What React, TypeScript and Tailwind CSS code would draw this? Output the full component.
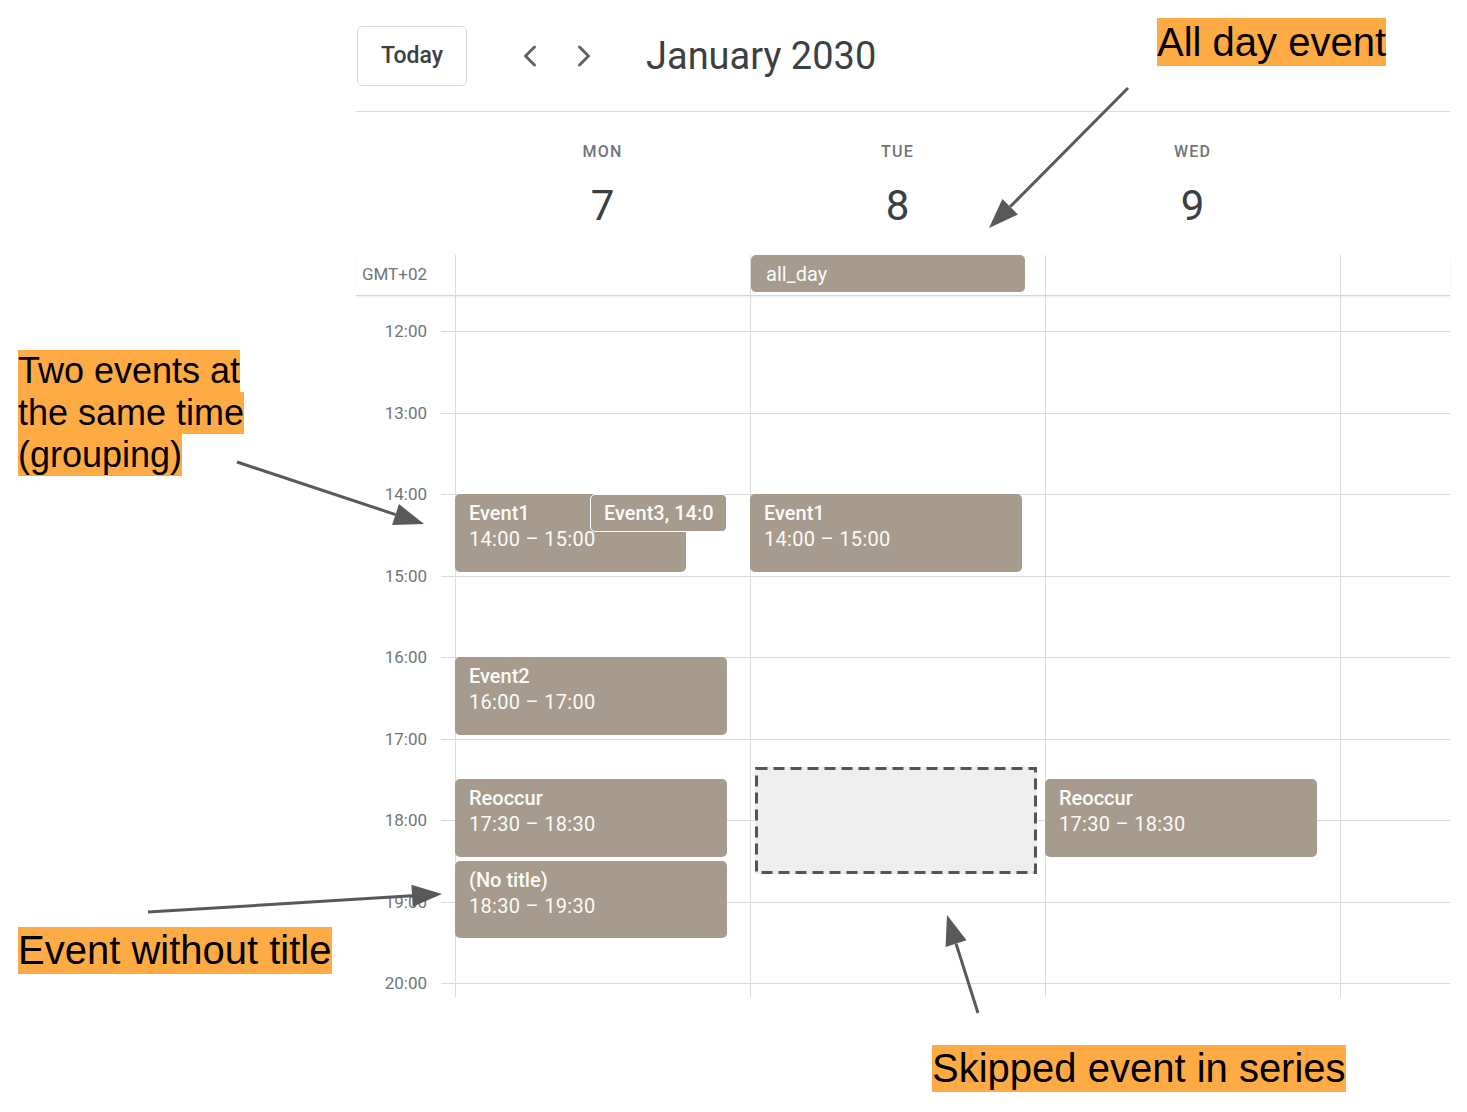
import React from "react"
import { ChevronLeft, ChevronRight } from "lucide-react"

type Ev = {
    title: string
    time?: string
    day: number
    start: number
    end: number
    width?: number
}

const HOUR = 81.5
const OFFSET = 35 // grid is scrolled so 12:00 sits 35px below the all-day row
const FIRST = 12

const hours = ["12:00", "13:00", "14:00", "15:00", "16:00", "17:00", "18:00", "19:00"]

const days = [
    { name: "MON", num: "7" },
    { name: "TUE", num: "8" },
    { name: "WED", num: "9" },
]

const events: Ev[] = [
    { title: "Event1", time: "14:00 – 15:00", day: 0, start: 14, end: 15, width: 231 },
    { title: "Event2", time: "16:00 – 17:00", day: 0, start: 16, end: 17 },
    { title: "Reoccur", time: "17:30 – 18:30", day: 0, start: 17.5, end: 18.5 },
    { title: "(No title)", time: "18:30 – 19:30", day: 0, start: 18.5, end: 19.5 },
    { title: "Event1", time: "14:00 – 15:00", day: 1, start: 14, end: 15 },
    { title: "Reoccur", time: "17:30 – 18:30", day: 2, start: 17.5, end: 18.5 },
]

const yOf = (h: number) => OFFSET + (h - FIRST) * HOUR

function EventCard({ ev }: { ev: Ev }) {
    const top = yOf(ev.start)
    const height = (ev.end - ev.start) * HOUR - 4
    return (
        <div
            className="absolute overflow-hidden whitespace-nowrap rounded-[5px] bg-[#a69b8c] px-[14px] pt-[6px] text-[#fbfaf8]"
            style={{ top, height, left: -1, width: ev.width ?? 272 }}
        >
            <div className="text-[20px] font-medium leading-[26px]">{ev.title}</div>
            <div className="text-[20px] leading-[26px] tracking-[0.3px]">{ev.time}</div>
        </div>
    )
}

// arrow with a filled head, tip at (x2, y2)
function Arrow({ x1, y1, x2, y2 }: { x1: number; y1: number; x2: number; y2: number }) {
    const dx = x2 - x1
    const dy = y2 - y1
    const len = Math.hypot(dx, dy)
    const ux = dx / len
    const uy = dy / len
    const L = 30
    const W = 11
    const bx = x2 - ux * L
    const by = y2 - uy * L
    const pts = `${x2},${y2} ${bx - uy * W},${by + ux * W} ${bx + uy * W},${by - ux * W}`
    return (
        <g>
            <line x1={x1} y1={y1} x2={bx} y2={by} stroke="#595959" strokeWidth={3} />
            <polygon points={pts} fill="#595959" />
        </g>
    )
}

export default function App() {
    return (
        <div className="relative h-[1112px] w-[1467px] overflow-hidden bg-white font-['Roboto',sans-serif]">
            <div className="ml-[356px] w-[1094px]">
                {/* toolbar */}
                <div className="flex items-center border-b border-[#dadce0] pb-[25px] pt-[26px]">
                    <button className="ml-[1px] h-[60px] w-[110px] rounded-[5px] border border-[#dadce0] text-[23px] font-medium text-[#3c4043]">
                        Today
                    </button>
                    <ChevronLeft className="ml-[45px] text-[#5f6368]" size={36} strokeWidth={2} />
                    <ChevronRight className="ml-[18px] text-[#5f6368]" size={36} strokeWidth={2} />
                    <h1 className="ml-[44px] text-[38px] font-normal leading-none text-[#3c4043]">January 2030</h1>
                </div>

                {/* day headers */}
                <div className="flex pb-[25px] pt-[30px]">
                    <div className="w-[99px]" />
                    {days.map((d) => (
                        <div key={d.name} className="flex w-[295px] flex-col items-center">
                            <div className="text-[16px] font-medium leading-[20px] tracking-[1.2px] text-[#70757a]">{d.name}</div>
                            <div className="mt-[20px] text-[42px] leading-[48px] text-[#3c4043]">{d.num}</div>
                        </div>
                    ))}
                </div>

                {/* all-day row */}
                <div className="flex h-[41px] border-b border-[#d3d5d9] shadow-[0_1px_2px_rgba(0,0,0,0.08)]">
                    <div className="flex w-[99px] items-center justify-end pr-[28px] text-[17px] text-[#70757a]">GMT+02</div>
                    {days.map((d, i) => (
                        <div key={d.name} className="relative w-[295px] border-l border-[#dadce0]">
                            {i === 1 && (
                                <div className="absolute left-0 top-0 flex h-[37px] w-[274px] items-center rounded-[5px] bg-[#a69b8c] px-[15px] text-[20px] text-[#fbfaf8]">
                                    all_day
                                </div>
                            )}
                        </div>
                    ))}
                    <div className="flex-1 border-l border-[#dadce0]" />
                </div>

                {/* time grid */}
                <div className="relative">
                    <div className="h-[35px]" />
                    {hours.map((h) => (
                        <div key={h} className="flex h-[81.5px]">
                            <div className="-mt-[8px] h-[16px] w-[71px] text-right text-[17px] leading-[16px] text-[#70757a]">{h}</div>
                            <div className="ml-[14px] flex-1 border-t border-[#dadce0]" />
                        </div>
                    ))}
                    <div className="flex h-[14px]">
                        <div className="-mt-[8px] h-[16px] w-[71px] text-right text-[17px] leading-[16px] text-[#70757a]">20:00</div>
                        <div className="ml-[14px] flex-1 border-t border-[#dadce0]" />
                    </div>

                    <div className="absolute inset-y-0 left-[99px] right-0 flex">
                        {days.map((d, i) => (
                            <div key={d.name} className="relative w-[295px] border-l border-[#dadce0]">
                                {events
                                    .filter((e) => e.day === i)
                                    .map((e, k) => (
                                        <EventCard key={k} ev={e} />
                                    ))}
                                {i === 0 && (
                                    <div className="absolute left-[134px] top-[198px] h-[38px] w-[137px] rounded-[5px] border border-white bg-[#a69b8c] pl-[13px] pr-[12px] text-[20px] font-medium leading-[36px] text-[#fbfaf8]">
                                        <div className="overflow-hidden whitespace-nowrap">Event3, 14:00</div>
                                    </div>
                                )}
                                {i === 1 && (
                                    <div className="absolute left-[4px] top-[471px] h-[107px] w-[282px] bg-[#eeeeee]">
                                        <svg className="absolute inset-0" width={282} height={107}>
                                            <rect x={1.5} y={1.5} width={279} height={104} fill="none" stroke="#555" strokeWidth={3} strokeDasharray="11 6" />
                                        </svg>
                                    </div>
                                )}
                            </div>
                        ))}
                        <div className="flex-1 border-l border-[#dadce0]" />
                    </div>
                </div>
            </div>

            {/* annotations */}
            <div className="absolute left-[1157px] top-[18px] bg-[#ffab45] font-['Liberation_Sans',Arial,sans-serif] text-[40px] leading-[48px] text-black">
                All day event
            </div>
            <div className="absolute left-[18px] top-[350px] font-['Liberation_Sans',Arial,sans-serif] text-[36px] leading-[42px] text-black">
                <div className="w-fit bg-[#ffab45]">Two events at</div>
                <div className="w-fit bg-[#ffab45]">the same time</div>
                <div className="w-fit bg-[#ffab45]">(grouping)</div>
            </div>
            <div className="absolute left-[18px] top-[927px] bg-[#ffab45] font-['Liberation_Sans',Arial,sans-serif] text-[40px] leading-[47px] text-black">
                Event without title
            </div>
            <div className="absolute left-[932px] top-[1045px] bg-[#ffab45] font-['Liberation_Sans',Arial,sans-serif] text-[40px] leading-[47px] text-black">
                Skipped event in series
            </div>

            <svg className="pointer-events-none absolute inset-0" width={1467} height={1112}>
                <Arrow x1={1128} y1={88} x2={989} y2={228} />
                <Arrow x1={237} y1={462} x2={424} y2={524} />
                <Arrow x1={148} y1={912} x2={442} y2={894} />
                <Arrow x1={978} y1={1013} x2={947} y2={915} />
            </svg>
        </div>
    )
}
